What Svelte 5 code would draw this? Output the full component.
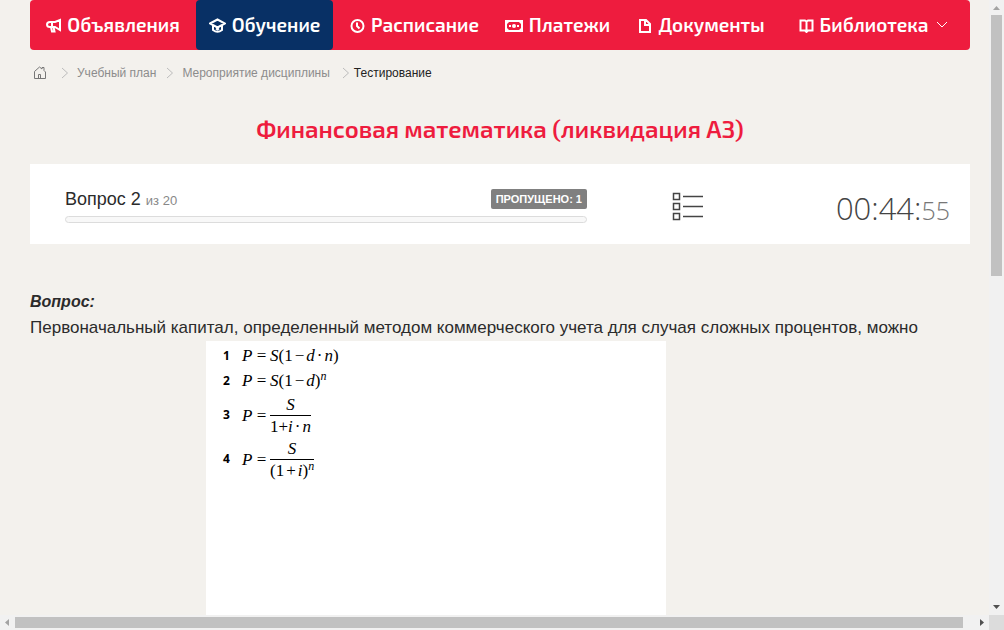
<script>
  const menu = [
    { icon: 'horn', label: 'Объявления' },
    { icon: 'cap', label: 'Обучение', active: true },
    { icon: 'clock', label: 'Расписание' },
    { icon: 'money', label: 'Платежи' },
    { icon: 'doc', label: 'Документы' },
    { icon: 'book', label: 'Библиотека', more: true },
  ];
  const crumbs = ['Учебный план', 'Мероприятие дисциплины'];
</script>

{#snippet arrow()}
  <svg class="arrow" width="8" height="12" viewBox="0 0 8 12" aria-hidden="true"><path d="M1 1l5.500 5L1 11" /></svg>
{/snippet}

<div class="window">
  <div class="view">
    <nav class="menu" aria-label="Главное меню">
      {#each menu as item}
        <a href="#top" class:active={item.active}>
          {#if item.icon === 'horn'}
            <svg width="15" height="16" viewBox="0 0 15 16"><path d="M14 3v10L9 10H4Q1 10 1 7.500T4 5H9zM6 5v5M5 10l1 4.500h2.500l-1-4.500" /></svg>
          {:else if item.icon === 'cap'}
            <svg width="17" height="16" viewBox="0 0 17 16"><path d="M1 6.500l7.500-4 7.500 4-7.500 4zM4 8.500v4.500q4.500 3.500 9 0V8.500" /><path d="M7 11.500l1.500 1 1.500-1" /></svg>
          {:else if item.icon === 'clock'}
            <svg width="15" height="16" viewBox="0 0 15 16"><circle cx="7.500" cy="9" r="6" /><path d="M7 5.500V9l2.500 2.500" /></svg>
          {:else if item.icon === 'money'}
            <svg width="18" height="16" viewBox="0 0 18 16"><path d="M1 4h16v10H1z" /><circle class="fill" cx="9" cy="9" r="2" /><path class="fill" d="M1 4h4L2 7zm16 0h-4l3 3zM1 14h4l-3-3zm16 0h-4l3-3zM4 8h2v2h-2zm8 0h2v2h-2z" /></svg>
          {:else if item.icon === 'doc'}
            <svg width="14" height="16" viewBox="0 0 14 16"><path d="M2 3h6l4 4v8H2zM7 3v5h5" /></svg>
          {:else}
            <svg width="15" height="16" viewBox="0 0 15 16"><path d="M1.500 3.500h4.500l1.500 1 1.500-1h4.500v10H9l-1.500 1.500L6 13.500H1.500zM7.500 4.500V14" /></svg>
          {/if}
          <span>{item.label}</span>
          {#if item.more}
            <svg class="more" width="12" height="8" viewBox="0 0 12 8"><path d="M1 1l5 5 5-5" /></svg>
          {/if}
        </a>
      {/each}
    </nav>

    <nav class="crumbs" aria-label="Навигация">
      <a href="#top" class="home" aria-label="Главная">
        <svg width="14" height="14" viewBox="0 0 14 14"><path d="M1.500 5.500L6.500 1 9 3V1.500h2v3l1.500 1.500v6.500h-11zM5.500 12.500V8.500h2v4" /></svg>
      </a>
      {#each crumbs as crumb}
        {@render arrow()}<a href="#top">{crumb}</a>
      {/each}
      {@render arrow()}<span class="current">Тестирование</span>
    </nav>

    <h1>Финансовая математика (ликвидация АЗ)</h1>

    <section class="panel">
      <div class="state">
        <div class="line">
          <div class="number">Вопрос 2 <small>из 20</small></div>
          <div class="badge">ПРОПУЩЕНО: 1</div>
        </div>
        <div class="progress" role="progressbar" aria-label="Прогресс" aria-valuenow="0"></div>
      </div>
      <button class="list" aria-label="Список вопросов">
        <svg width="32" height="30" viewBox="0 0 32 30">
          <path d="M1.500 1.500h6v6h-6zM1.500 11.500h6v6h-6zM1.500 21.500h6v6h-6zM11 4.500h20M11 14.500h20M11 24.500h20" />
        </svg>
      </button>
      <div class="timer">00:44:<small>55</small></div>
    </section>

    <main>
      <h2>Вопрос:</h2>
      <p>Первоначальный капитал, определенный методом коммерческого учета для случая сложных процентов, можно</p>
      <div class="sheet">
        <div class="row"><b>1</b><span class="left"><i>P</i> =</span><span><i>S</i>(1<span class="op">−</span><i>d</i><span class="op">·</span><i>n</i>)</span></div>
        <div class="row"><b>2</b><span class="left"><i>P</i> =</span><span><i>S</i>(1<span class="op">−</span><i>d</i>)<sup>n</sup></span></div>
        <div class="row tall">
          <b>3</b><span class="left"><i>P</i> =</span>
          <span class="frac"><span><i>S</i></span><span class="under">1+<i>i</i><span class="op">·</span><i>n</i></span></span>
        </div>
        <div class="row tall">
          <b>4</b><span class="left"><i>P</i> =</span>
          <span class="frac"><span><i>S</i></span><span class="under">(1<span class="op">+</span><i>i</i>)<sup>n</sup></span></span>
        </div>
      </div>
    </main>
  </div>

  <div class="bar vertical" aria-hidden="true">
    <svg width="15" height="15" viewBox="0 0 15 15"><path fill="#a3a3a3" d="M4 10h7L7.500 6z" /></svg>
    <div class="track"><div class="thumb"></div></div>
    <svg width="15" height="15" viewBox="0 0 15 15"><path fill="#505050" d="M4 5h7L7.500 9z" /></svg>
  </div>
  <div class="bar horizontal" aria-hidden="true">
    <svg width="15" height="15" viewBox="0 0 15 15"><path fill="#a3a3a3" d="M9 4v7L5 7.500z" /></svg>
    <div class="track"><div class="thumb"></div></div>
    <svg width="15" height="15" viewBox="0 0 15 15"><path fill="#505050" d="M6 4v7l4-3.500z" /></svg>
  </div>
  <div class="corner"></div>
</div>

<style>
  :global(body) { margin: 0; background: #f3f1ed; }
  .window {
    display: grid;
    grid-template: minmax(0, 1fr) 15px / minmax(0, 1fr) 15px;
    height: 100vh;
    font-family: "Liberation Sans", Arial, sans-serif;
    color: #2b2b2b;
  }
  .view { overflow: hidden; padding: 0 19px 0 30px; }
  a { color: inherit; text-decoration: none; }
  svg { display: block; flex: none; fill: none; }

  .menu {
    display: grid;
    grid-template-columns: 166fr 137fr 163fr 123fr 165fr 179fr;
    height: 50px;
    padding-right: 7px;
    border-radius: 4px;
    background: #ee1c3e;
    color: #fff;
    font: 600 19px/24px "Exo 2", "Noto Sans", sans-serif;
  }
  .menu a {
    display: flex;
    align-items: center;
    justify-content: center;
    gap: 6px;
    border-radius: 4px;
    white-space: nowrap;
  }
  .menu a.active { background: #083065; }
  .menu svg { stroke: #fff; stroke-width: 2; }
  .menu svg.more { margin-left: 2px; stroke-width: 1; }
  .menu .fill { fill: #fff; stroke: none; }

  .crumbs {
    display: flex;
    align-items: center;
    height: 46px;
    padding-left: 3px;
    font-size: 12px;
    color: #8c8c8c;
  }
  .home svg { stroke: #777; }
  .arrow { margin: 0 8px 0 10px; stroke: #bcbcbc; }
  .home + .arrow { margin-left: 14px; }
  .arrow:has(+ .current) { margin: 0 4px 0 12px; }
  .current { color: #222; }

  h1 {
    margin: 16px 0 18px;
    text-align: center;
    font: 600 24px/34px "Exo 2", "Noto Sans", sans-serif;
    color: #ee1c3e;
  }

  .panel {
    display: flex;
    align-items: center;
    height: 80px;
    padding: 0 20px 0 35px;
    background: #fff;
  }
  .state { flex: 0 1 522px; padding-top: 4px; }
  .line { display: flex; justify-content: space-between; align-items: center; height: 20px; }
  .number { font-size: 18px; }
  .number small { font-size: 13px; color: #888; }
  .badge {
    padding: 0 5px;
    border-radius: 2px;
    background: #808080;
    color: #fff;
    font: bold 11px/20px "Liberation Sans", Arial, sans-serif;
  }
  .progress {
    height: 5px;
    margin-top: 7px;
    border: 1px solid #dcdcdc;
    border-radius: 4px;
    background: #f8f8f8;
  }
  .list { margin: 6px 0 0 85px; padding: 0; border: 0; background: none; }
  .list svg { stroke: #444; stroke-width: 1.5; }
  .timer {
    margin: 10px 0 0 auto;
    font: 300 31px/40px "Open Sans", sans-serif;
    color: #444;
  }
  .timer small { font-size: 25px; color: #777; }

  main { padding-top: 46px; }
  h2 { margin: 0; font: italic bold 16px/24px "Liberation Sans", Arial, sans-serif; }
  p { margin: 0; font-size: 17px; line-height: 27px; white-space: nowrap; }

  .sheet {
    width: 460px;
    height: 400px;
    margin-left: 176px;
    padding: 2px 0 0 17px;
    box-sizing: border-box;
    background: #fff;
    color: #000;
    font: 17px/21px "Liberation Serif", "Times New Roman", serif;
  }
  .row { display: flex; align-items: center; height: 25px; white-space: nowrap; }
  .tall { height: 44px; }
  .row b { width: 19px; font: bold 12px/20px "Open Sans", sans-serif; }
  .left { width: 28px; }
  .op { padding: 0 2px; }
  sup { font-size: 12px; font-style: italic; line-height: 0; vertical-align: 6px; }
  .frac { display: grid; text-align: center; }
  .under { border-top: 1px solid #000; }

  .bar { display: flex; background: #f1f1f1; }
  .vertical { flex-direction: column; }
  .horizontal { grid-row: 2; }
  .track { flex: 1; }
  .thumb { background: #c1c1c1; }
  .vertical .thumb { width: 11px; height: 44.600%; margin-left: 2px; }
  .horizontal .thumb { width: 98.900%; height: 11px; margin-top: 2px; }
  .corner { background: #dcdcdc; }
</style>
